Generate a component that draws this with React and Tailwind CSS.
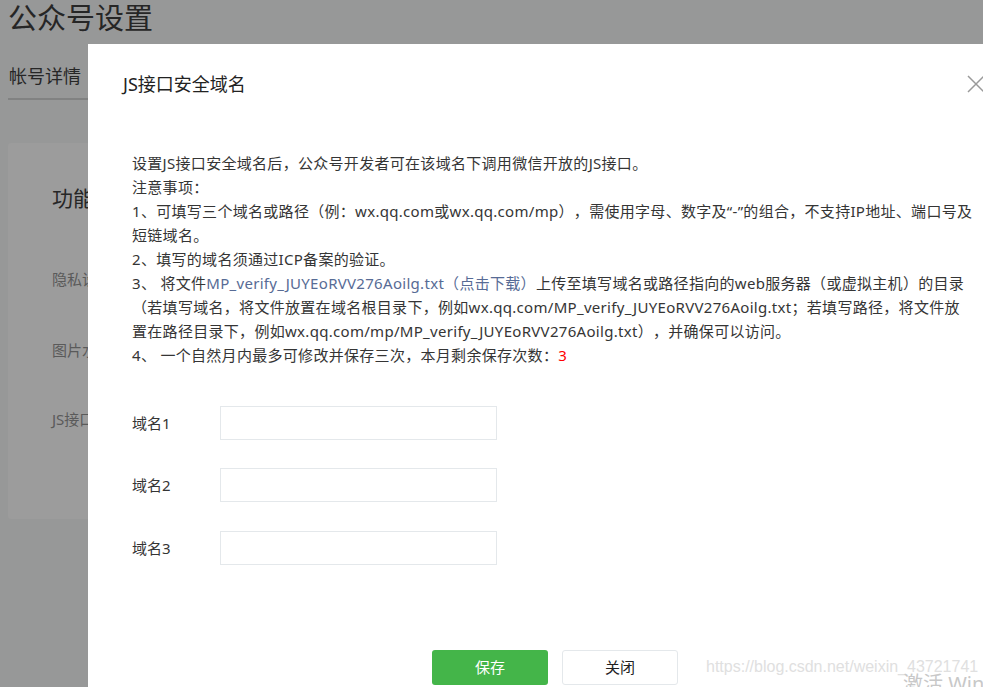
import React from "react";

const font = { fontFamily: '"Noto Sans", "Noto Sans CJK SC", sans-serif' };

function Line({ children }) {
  return <div className="whitespace-nowrap h-[24px] leading-[24px]">{children}</div>;
}

function Field({ label, mt }) {
  return (
    <div className={`flex items-center ${mt}`}>
      <div className="w-[88px] text-[15px] text-[#353535]">{label}</div>
      <div className="w-[277px] h-[34px] border border-[#e4e8eb] bg-white" />
    </div>
  );
}

export default function App() {
  return (
    <div
      className="relative w-[983px] h-[687px] overflow-hidden bg-[#979898] [text-spacing-trim:space-all]"
      style={font}
    >
      {/* dimmed background page */}
      <div className="pl-[8px]">
        <div className="text-[29px] leading-[36px] text-[#262626]">公众号设置</div>
        <div className="mt-[28px] text-[18px] leading-[24px] text-[#262626] pl-[1px]">帐号详情</div>
        <div className="mt-[10px] h-[2px] bg-[#818282] w-[200px]" />
        <div className="mt-[43px] w-[300px] h-[376px] rounded-[3px] bg-[#9c9c9c] pl-[44px] pt-[41px]">
          <div className="text-[21px] leading-[28px] text-[#262626]">功能设置</div>
          <div className="mt-[57px] text-[15px] leading-[20px] text-[#5a5a5a]">隐私设置</div>
          <div className="mt-[51px] text-[15px] leading-[20px] text-[#5a5a5a]">图片水印</div>
          <div className="mt-[49px] text-[15px] leading-[20px] text-[#5a5a5a]">JS接口安全域名</div>
        </div>
      </div>

      {/* modal */}
      <div className="absolute left-[88px] top-[44px] w-[934px] h-[700px] bg-white">
        <div className="pl-[35px] pt-[28px] text-[18px] leading-[24px] text-[#222]">JS接口安全域名</div>
        <svg
          className="absolute left-[878px] top-[30px]"
          width="20"
          height="20"
          viewBox="0 0 20 20"
        >
          <path d="M2 2 L18 18 M18 2 L2 18" stroke="#9a9a9a" strokeWidth="1.5" fill="none" />
        </svg>

        <div className="pl-[44px] mt-[55px] text-[15px] tracking-[0.3px] text-[#353535]">
          <Line>设置JS接口安全域名后，公众号开发者可在该域名下调用微信开放的JS接口。</Line>
          <Line>注意事项：</Line>
          <Line>1、可填写三个域名或路径（例：wx.qq.com或wx.qq.com/mp），需使用字母、数字及“-”的组合，不支持IP地址、端口号及</Line>
          <Line>短链域名。</Line>
          <Line>2、填写的域名须通过ICP备案的验证。</Line>
          <Line>
            3、 将文件<span className="text-[#576b95]">MP_verify_JUYEoRVV276Aoilg.txt（点击下载）</span>上传至填写域名或路径指向的web服务器（或虚拟主机）的目录
          </Line>
          <Line>（若填写域名，将文件放置在域名根目录下，例如wx.qq.com/MP_verify_JUYEoRVV276Aoilg.txt；若填写路径，将文件放</Line>
          <Line>置在路径目录下，例如wx.qq.com/mp/MP_verify_JUYEoRVV276Aoilg.txt），并确保可以访问。</Line>
          <Line>
            4、 一个自然月内最多可修改并保存三次，本月剩余保存次数：<span className="text-[#f00]">3</span>
          </Line>

          <div className="mt-[39px] tracking-normal">
            <Field label="域名1" mt="mt-0" />
            <Field label="域名2" mt="mt-[28px]" />
            <Field label="域名3" mt="mt-[29px]" />
          </div>
        </div>

        <div className="mt-[85px] flex justify-center gap-[14px]">
          <div className="w-[116px] h-[35px] rounded-[3px] bg-[#44b549] text-white text-[15px] flex items-center justify-center">
            保存
          </div>
          <div className="w-[116px] h-[35px] rounded-[3px] border border-[#e4e8eb] bg-white text-[#222] text-[15px] flex items-center justify-center">
            关闭
          </div>
        </div>
      </div>

      {/* watermarks */}
      <div
        className="absolute left-[706px] top-[657px] text-[16px] leading-[20px] text-[#e0e0e0] whitespace-nowrap"
        style={{ fontFamily: '"Liberation Sans", Arial, sans-serif' }}
      >
        https://blog.csdn.net/weixin_43721741
      </div>
      <div
        className="absolute left-[903px] top-[672px] text-[20px] leading-[24px] text-[#c8c8c8] whitespace-nowrap"
        style={{ fontFamily: '"Noto Sans", "Noto Sans CJK SC", sans-serif' }}
      >
        激活 Win
      </div>
    </div>
  );
}
